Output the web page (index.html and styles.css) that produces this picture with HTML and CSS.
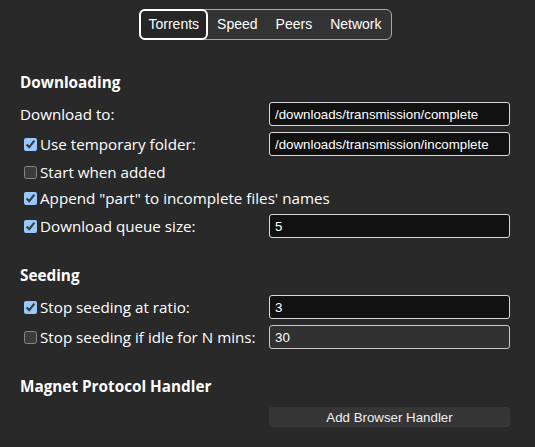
FILE: index.html
```html
<!DOCTYPE html>
<html lang="en">
<head>
<meta charset="utf-8">
<title>Preferences</title>
<link rel="stylesheet" href="styles.css">
</head>
<body>
<div class="prefs">
  <div class="tabbar-wrap">
    <div class="tabbar">
      <button class="tab selected">Torrents</button>
      <button class="tab">Speed</button>
      <button class="tab">Peers</button>
      <button class="tab">Network</button>
    </div>
  </div>

  <section class="section">
    <h3 class="section-title">Downloading</h3>
    <div class="grid">
      <label class="label">Download to:</label>
      <input class="field" type="text" value="/downloads/transmission/complete">

      <label class="label"><input type="checkbox" checked>Use temporary folder:</label>
      <input class="field" type="text" value="/downloads/transmission/incomplete">

      <label class="label full"><input type="checkbox">Start when added</label>

      <label class="label full"><input type="checkbox" checked>Append "part" to incomplete files' names</label>

      <label class="label"><input type="checkbox" checked>Download queue size:</label>
      <input class="field" type="text" value="5">
    </div>
  </section>

  <section class="section">
    <h3 class="section-title">Seeding</h3>
    <div class="grid">
      <label class="label"><input type="checkbox" checked>Stop seeding at ratio:</label>
      <input class="field" type="text" value="3">

      <label class="label"><input type="checkbox">Stop seeding if idle for N mins:</label>
      <input class="field disabled" type="text" value="30" disabled>
    </div>
  </section>

  <section class="section">
    <h3 class="section-title">Magnet Protocol Handler</h3>
    <div class="grid button-grid">
      <span></span>
      <button class="handler-btn">Add Browser Handler</button>
    </div>
  </section>
</div>
</body>
</html>
```

FILE: styles.css
```css
html, body {
  margin: 0;
  padding: 0;
  background: #292929;
  color-scheme: dark;
}

body {
  width: 535px;
  height: 447px;
  overflow: hidden;
  color: #ffffff;
  font-family: "Open Sans", "Noto Sans", sans-serif;
  font-size: 15.2px;
}

.prefs {
  padding: 9px 25px 0 20px;
}

.tabbar-wrap {
  display: flex;
  justify-content: center;
}

.tabbar {
  display: inline-flex;
  border: 1px solid #a8a8a8;
  border-radius: 6px;
  background: #333333;
}

.tab {
  font-family: "Liberation Sans", Arial, sans-serif;
  font-size: 14px;
  line-height: 17px;
  color: #ffffff;
  background: transparent;
  border: 2px solid transparent;
  border-radius: 6px;
  padding: 4px 7px;
  margin: 0;
  cursor: pointer;
}

.tab.selected {
  border-color: #ffffff;
  background: #262626;
  margin: -1px 0 -1px -1px;
  padding: 5px 7px 5px 8px;
}

.section-title {
  margin: 32px 0 0 0;
  font-size: 15.3px;
  line-height: 20px;
  font-weight: 700;
}

.section + .section .section-title {
  margin-top: 27px;
}

.grid {
  display: grid;
  grid-template-columns: 1fr 241px;
  row-gap: 6px;
  margin-top: 10px;
}

.label {
  display: flex;
  align-items: center;
  min-height: 20px;
  line-height: 20px;
  white-space: nowrap;
}

.label.full {
  grid-column: 1 / 3;
}

.label input[type="checkbox"] {
  width: 13px;
  height: 13px;
  margin: 0 3px 0 4px;
  flex: none;
}

.field {
  box-sizing: border-box;
  height: 24px;
  width: 241px;
  margin: 0;
  padding: 0 5px;
  font-family: "Liberation Sans", Arial, sans-serif;
  font-size: 13.3px;
  color: #ffffff;
  background: #111111;
  border: 1px solid #d8d8d8;
  border-radius: 3px;
  outline: none;
}

.field.disabled {
  background: #313131;
  border-color: #c8c8c8;
  color: #ffffff;
}

.button-grid {
  margin-top: 11px;
}

.handler-btn {
  box-sizing: border-box;
  height: 20px;
  width: 241px;
  margin: 0;
  padding: 0;
  font-family: "Liberation Sans", Arial, sans-serif;
  font-size: 13.3px;
  color: #f0f0f0;
  background: #363636;
  border: 1px solid #383838;
  border-radius: 3px;
}
```
